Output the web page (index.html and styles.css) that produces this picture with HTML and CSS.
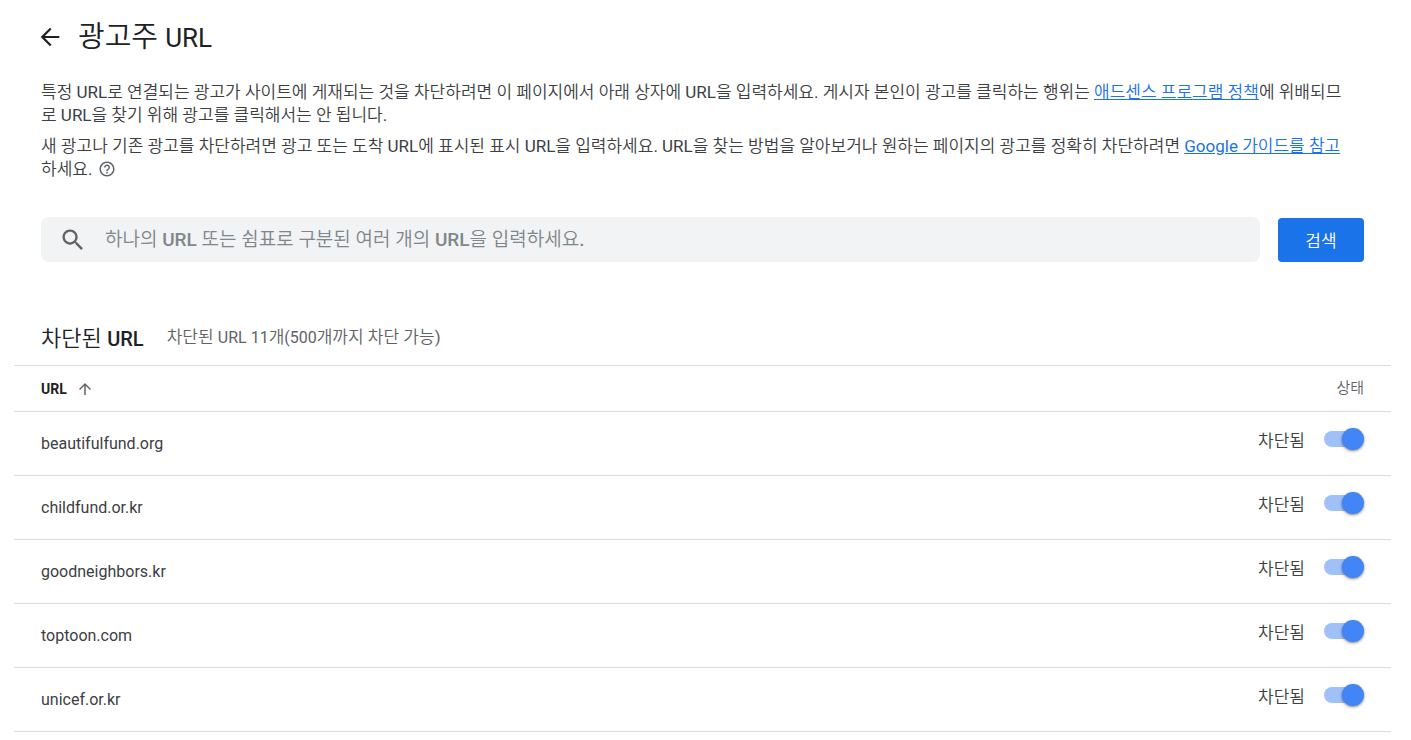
FILE: index.html
```html
<!DOCTYPE html>
<html lang="ko">
<head>
<meta charset="utf-8">
<meta name="viewport" content="width=device-width, initial-scale=1">
<title>광고주 URL</title>
<link rel="stylesheet" href="styles.css">
</head>
<body>
<main class="page">
  <header class="page-header">
    <button class="icon-button" type="button" aria-label="뒤로">
      <svg width="28" height="28" viewBox="0 0 24 24" aria-hidden="true"><path fill="#202124" d="M20 11.1H7.6l5.7-5.7L12 4l-8 8 8 8 1.3-1.4-5.7-5.7H20z"/></svg>
    </button>
    <h1 class="page-title">광고주 <span class="latin">URL</span></h1>
  </header>

  <section class="intro">
    <p>특정 URL로 연결되는 광고가 사이트에 게재되는 것을 차단하려면 이 페이지에서 아래 상자에 URL을 입력하세요. 게시자 본인이 광고를 클릭하는 행위는 <a href="#">애드센스 프로그램 정책</a>에 위배되므<br>로 URL을 찾기 위해 광고를 클릭해서는 안 됩니다.</p>
    <p>새 광고나 기존 광고를 차단하려면 광고 또는 도착 URL에 표시된 표시 URL을 입력하세요. URL을 찾는 방법을 알아보거나 원하는 페이지의 광고를 정확히 차단하려면 <a href="#">Google 가이드를 참고</a><br>하세요.
      <button class="help" type="button" aria-label="도움말"><svg width="18" height="18" viewBox="0 0 24 24" aria-hidden="true"><path fill="#5f6368" d="M11 18h2v-2h-2v2zm1-16C6.48 2 2 6.48 2 12s4.48 10 10 10 10-4.48 10-10S17.52 2 12 2zm0 18c-4.41 0-8-3.59-8-8s3.59-8 8-8 8 3.59 8 8-3.59 8-8 8zm0-14c-2.21 0-4 1.79-4 4h2c0-1.1.9-2 2-2s2 .9 2 2c0 2-3 1.75-3 5h2c0-2.25 3-2.5 3-5 0-2.21-1.79-4-4-4z"/></svg></button></p>
  </section>

  <form class="search">
    <label class="search-box">
      <svg width="28" height="28" viewBox="0 0 24 24" aria-hidden="true"><path fill="#5f6368" d="M15.5 14h-.79l-.28-.27C15.41 12.59 16 11.11 16 9.5 16 5.91 13.09 3 9.5 3S3 5.91 3 9.5 5.91 16 9.5 16c1.61 0 3.09-.59 4.23-1.57l.27.28v.79l5 4.99L20.49 19l-4.99-5zm-6 0C7.01 14 5 11.99 5 9.5S7.01 5 9.5 5 14 7.01 14 9.5 11.99 14 9.5 14z"/></svg>
      <input class="search-input" type="text" aria-label="URL 검색" placeholder="하나의 URL 또는 쉼표로 구분된 여러 개의 URL을 입력하세요.">
    </label>
    <button class="search-button" type="button">검색</button>
  </form>

  <section class="blocked">
    <div class="blocked-header">
      <h2 class="blocked-title">차단된 <span class="latin">URL</span></h2>
      <span class="blocked-count">차단된 <span class="latin">URL 11</span>개<span class="latin">(500</span>개까지 차단 가능)</span>
    </div>
    <table class="url-table">
      <thead>
        <tr>
          <th class="url-heading" scope="col"><span class="sort">URL
            <svg width="18" height="18" viewBox="0 0 24 24" aria-hidden="true"><path fill="#5f6368" d="M4 12l1.41 1.41L11 7.83V20h2V7.83l5.58 5.59L20 12l-8-8-8 8z"/></svg></span></th>
          <th class="status-heading" scope="col">상태</th>
        </tr>
      </thead>
      <tbody>
        <tr><td class="url">beautifulfund.org</td><td class="status-cell"><label class="status">차단됨<input class="switch" type="checkbox" checked></label></td></tr>
        <tr><td class="url">childfund.or.kr</td><td class="status-cell"><label class="status">차단됨<input class="switch" type="checkbox" checked></label></td></tr>
        <tr><td class="url">goodneighbors.kr</td><td class="status-cell"><label class="status">차단됨<input class="switch" type="checkbox" checked></label></td></tr>
        <tr><td class="url">toptoon.com</td><td class="status-cell"><label class="status">차단됨<input class="switch" type="checkbox" checked></label></td></tr>
        <tr><td class="url">unicef.or.kr</td><td class="status-cell"><label class="status">차단됨<input class="switch" type="checkbox" checked></label></td></tr>
      </tbody>
    </table>
  </section>
</main>
</body>
</html>
```
FILE: styles.css
```css
* {
  box-sizing: border-box;
}

body {
  margin: 0;
  background: #fff;
  color: #3c4043;
  font-family: Roboto, "Noto Sans CJK KR DemiLight", "Noto Sans CJK KR Light", "Noto Sans CJK KR", sans-serif;
  font-size: 17px;
  font-weight: 400;
}

button,
input {
  font: inherit;
}

.page {
  padding: 0 20px 8px 14px;
}

.page-header {
  display: flex;
  align-items: center;
  gap: 14px;
  height: 74px;
  padding-left: 22px;
}

.icon-button,
.help {
  display: inline-flex;
  padding: 0;
  border: 0;
  background: none;
  cursor: pointer;
}

.help {
  margin-left: 1px;
  vertical-align: -3px;
}

.page-title {
  margin: 0;
  color: #202124;
  font-size: 29px;
  font-weight: 400;
  line-height: 40px;
}

.page-title .latin {
  font-size: 26px;
}

.intro {
  padding: 7px 27px 0;
}

.intro p {
  margin: 0 0 8px;
  line-height: 23px;
}

.intro a {
  color: #1a73e8;
}

.search {
  display: flex;
  align-items: center;
  gap: 18px;
  margin: 36px 27px 0;
}

.search-box {
  display: flex;
  flex: 1;
  align-items: center;
  gap: 18px;
  height: 45px;
  padding: 0 18px;
  border-radius: 8px;
  background: #f1f3f4;
}

.search-input {
  flex: 1;
  min-width: 0;
  padding: 0;
  border: 0;
  outline: 0;
  background: none;
  color: #3c4043;
  font-size: 19px;
  font-weight: 500;
}

.search-input::placeholder {
  color: #80868b;
  opacity: 1;
}

.search-button {
  width: 86px;
  height: 44px;
  border: 0;
  border-radius: 4px;
  background: #1a73e8;
  color: #fff;
}

.blocked {
  padding-top: 48px;
}

.blocked-header {
  display: flex;
  align-items: center;
  gap: 23px;
  height: 55px;
  padding: 0 27px 4px;
}

.blocked-title {
  margin: 0;
  color: #202124;
  font-size: 22px;
  font-weight: 400;
}

.blocked-title .latin {
  font-size: 20px;
  font-weight: 500;
}

.blocked-count {
  color: #5f6368;
}

.blocked-count .latin {
  font-size: 16px;
}

.url-table {
  width: 100%;
  border-collapse: collapse;
}

.url-table th,
.url-table td {
  height: 64px;
  padding: 0 27px;
  border-top: 1px solid #dadce0;
  border-bottom: 1px solid #dadce0;
  text-align: left;
}

.url-table th {
  height: 46px;
}

.url-heading {
  color: #202124;
  font-size: 14px;
  font-weight: 700;
}

.sort {
  display: flex;
  align-items: center;
  gap: 9px;
}

.url-table .status-heading {
  padding-bottom: 4px;
  color: #5f6368;
  font-size: 15px;
  font-weight: 400;
  text-align: right;
}

.url {
  font-size: 16px;
}

.url-table .status-cell {
  padding-bottom: 6px;
}

.status {
  display: flex;
  align-items: flex-start;
  justify-content: flex-end;
  gap: 19px;
  line-height: 26px;
}

.switch {
  position: relative;
  display: flex;
  align-items: center;
  width: 40px;
  height: 22px;
  margin: 0;
  appearance: none;
  cursor: pointer;
}

.switch::before {
  width: 36px;
  height: 16px;
  border-radius: 8px;
  background: #dadce0;
  content: "";
}

.switch::after {
  position: absolute;
  left: 0;
  width: 22px;
  height: 22px;
  border-radius: 50%;
  background: #fff;
  box-shadow: 0 1px 3px rgba(0, 0, 0, 0.5);
  content: "";
}

.switch:checked::before {
  background: #a0c0fa;
}

.switch:checked::after {
  right: 0;
  left: auto;
  background: #4285f4;
}
```
